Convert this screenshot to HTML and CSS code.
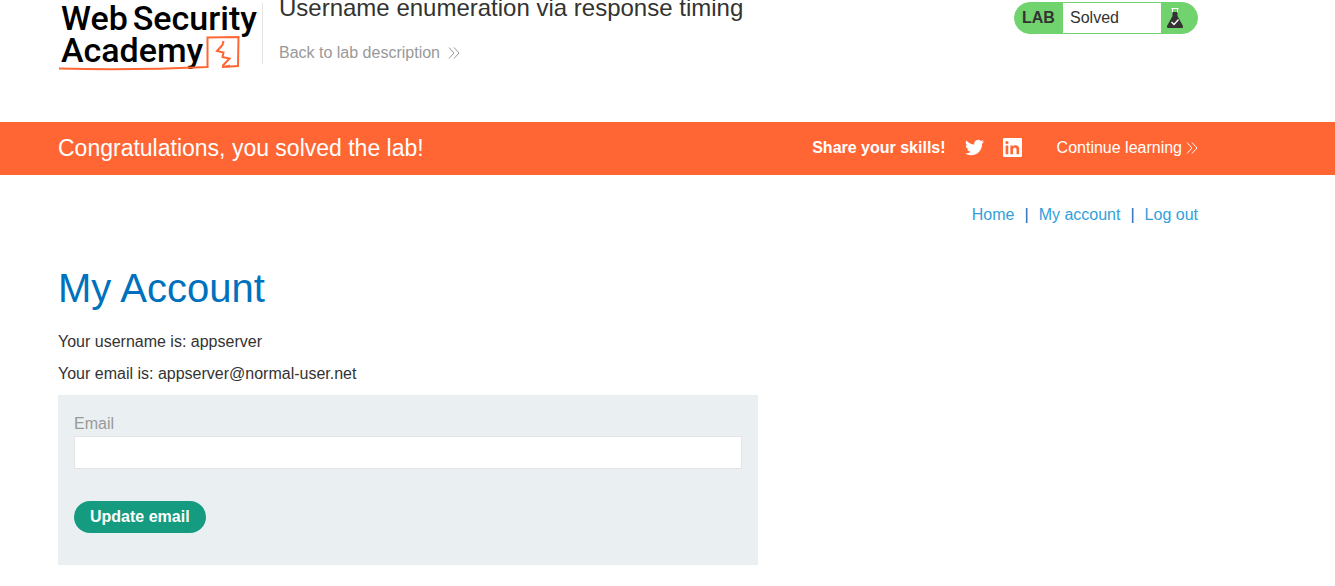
FILE: index.html
```html
<!DOCTYPE html>
<html lang="en">
<head>
<meta charset="utf-8">
<title>Username enumeration via response timing</title>
<link rel="stylesheet" href="styles.css">
</head>
<body>
<header class="lab-header container">
  <a class="logo" href="#">
    <span class="logo-line"><span>Web</span><span>Security</span></span>
    <span class="logo-line">Academy</span>
    <svg class="logo-mark" viewBox="0 0 200 74" width="200" height="74" fill="none" stroke="#ff6633" stroke-width="2" aria-hidden="true">
      <path d="M1 68.500 C40 69.500 105 69 149.500 67 L149.500 37.500 L180.500 37 L180 66 L164 67 L171 66 L170.500 65"/>
      <path d="M165.500 41 L164.500 45 L159 51 L165.500 52.500 L164.500 57 L171.500 58.500 L164.500 66"/>
    </svg>
  </a>
  <div class="title">
    <h2>Username enumeration via response timing</h2>
    <a class="back" href="#">Back to lab description
      <svg viewBox="0 0 12 12" width="12" height="12" fill="none" stroke="currentColor" aria-hidden="true"><path d="M1 0.500 L6 6 L1 11.500 M6 0.500 L11 6 L6 11.500"/></svg>
    </a>
  </div>
  <div class="status">
    <span class="status-tag">LAB</span>
    <span class="status-text">Solved</span>
    <svg class="flask" viewBox="0 0 18 22" width="18" height="22" aria-hidden="true">
      <path d="M5.500 1.500 H12.500 M6.500 1.500 V6 M11.500 1.500 V6" stroke="#fff" fill="none"/>
      <path d="M6.500 5 H11.500 V9 L17 19 Q17.500 21 16 21 H2 Q0.500 21 1 19 L6.500 9 Z" fill="#333332"/>
      <path d="M5.500 15 L8 17.500 L12.500 12.500" stroke="#fff" stroke-width="1.300" fill="none"/>
    </svg>
  </div>
</header>

<section class="banner container">
  <p class="banner-text">Congratulations, you solved the lab!</p>
  <div class="share">
    <strong>Share your skills!</strong>
    <a href="#" aria-label="Share on Twitter"><svg viewBox="0 0 24 24" width="19" height="19" fill="currentColor" aria-hidden="true"><path d="M23.950 4.570a10 10 0 0 1-2.820.775 4.960 4.960 0 0 0 2.160-2.723c-.950.555-2.010.959-3.130 1.184a4.920 4.920 0 0 0-8.380 4.482C7.690 8.095 4.070 6.130 1.640 3.162a4.820 4.820 0 0 0-.666 2.475c0 1.710.870 3.213 2.190 4.096a4.900 4.900 0 0 1-2.230-.616v.060a4.920 4.920 0 0 0 3.950 4.827 5 5 0 0 1-2.210.085 4.940 4.940 0 0 0 4.600 3.419A9.870 9.870 0 0 1 0 19.540a13.990 13.990 0 0 0 7.550 2.209c9.050 0 14-7.496 14-13.985 0-.210 0-.420-.015-.630a9.940 9.940 0 0 0 2.460-2.548z"/></svg></a>
    <a href="#" aria-label="Share on LinkedIn"><svg viewBox="0 0 18 18" width="19" height="19" aria-hidden="true"><rect width="18" height="18" rx="1" fill="#fff"/><path d="M2.500 7h2.500v8.500H2.500z M7 7h2.300v1.200c1.400-2.200 6-1.700 6 2V15.500h-2.500v-4.500c0-2.700-3.300-2.500-3.300 0V15.500H7z" fill="#ff6633"/><circle cx="3.750" cy="4.300" r="1.500" fill="#ff6633"/></svg></a>
    <a class="continue" href="#">Continue learning
      <svg viewBox="0 0 12 12" width="12" height="12" fill="none" stroke="currentColor" aria-hidden="true"><path d="M1 0.500 L6 6 L1 11.500 M6 0.500 L11 6 L6 11.500"/></svg>
    </a>
  </div>
</section>

<nav class="links container">
  <a href="#">Home</a><span>|</span><a href="#">My account</a><span>|</span><a href="#">Log out</a>
</nav>

<main class="account container">
  <h1>My Account</h1>
  <p>Your username is: appserver</p>
  <p>Your email is: appserver@normal-user.net</p>
  <form class="email-form">
    <label for="email">Email</label>
    <input id="email" type="email" name="email">
    <button type="submit">Update email</button>
  </form>
</main>
</body>
</html>
```

FILE: styles.css
```css
* {
  box-sizing: border-box;
}

body {
  margin: 0;
  background: #fff;
  color: #333332;
  font: 16px/24px "Liberation Sans", Arial, sans-serif;
}

h1, h2, p {
  margin: 0;
  font-weight: 400;
}

a {
  text-decoration: none;
}

.container {
  padding-left: 58px;
  padding-right: 137px;
}

.lab-header {
  display: flex;
  align-items: flex-start;
  padding-bottom: 48px;
}

.logo {
  position: relative;
  width: 204px;
  height: 74px;
  padding: 2px 0 0 3px;
  color: #000;
  font: 500 34px/32px Roboto, sans-serif;
}

.logo-line {
  display: flex;
  gap: 5px;
}

.logo-mark {
  position: absolute;
  left: 0;
  top: 0;
}

.title {
  flex: 1;
  padding-left: 17px;
  background: linear-gradient(#e4e4e4, #e4e4e4) 0 3px / 1px 61px no-repeat;
  height: 66px;
}

.title h2 {
  font-size: 24px;
  line-height: 16px;
}

.back {
  display: flex;
  align-items: center;
  gap: 8px;
  margin-top: 25px;
  color: #999;
}

.status {
  display: flex;
  align-items: center;
  width: 184px;
  height: 32px;
  margin-top: 2px;
  border: 1px solid #70d36e;
  border-radius: 16px;
  background: #70d36e;
  overflow: hidden;
}

.status-tag {
  width: 48px;
  padding-left: 7px;
  font-weight: 700;
}

.status-text {
  width: 98px;
  padding: 3px 7px;
  background: #fff;
}

.flask {
  margin-left: 5px;
}

.banner {
  display: flex;
  align-items: center;
  justify-content: space-between;
  min-height: 53px;
  padding-bottom: 2px;
  background: #ff6633;
  color: #fff;
}

.banner a {
  display: flex;
  color: #fff;
}

.banner-text {
  font-size: 23px;
}

.share {
  display: flex;
  align-items: center;
  gap: 19px;
}

.share .continue {
  align-items: center;
  gap: 4px;
  margin-left: 16px;
}

.links {
  display: flex;
  justify-content: flex-end;
  gap: 10px;
  padding-top: 28px;
  color: #0071bc;
}

.links a {
  color: #329fdb;
}

.account h1 {
  margin: 37px 0 18px;
  color: #0071bc;
  font-size: 40px;
  line-height: 48px;
}

.account p {
  margin-bottom: 8px;
}

.email-form {
  display: flex;
  flex-direction: column;
  align-items: flex-start;
  max-width: 700px;
  margin-top: 9px;
  padding: 17px 16px 32px;
  background: #eaeff2;
}

.email-form label {
  color: #999;
}

.email-form input {
  width: 100%;
  height: 33px;
  margin: 0 0 32px;
  padding: 0 8px;
  border: 1px solid #e4e4e4;
  background: #fff;
  font: inherit;
}

.email-form button {
  height: 32px;
  padding: 0 16px;
  border: 0;
  border-radius: 16px;
  background: #159b80;
  color: #fff;
  font: inherit;
  font-weight: 700;
}
```
